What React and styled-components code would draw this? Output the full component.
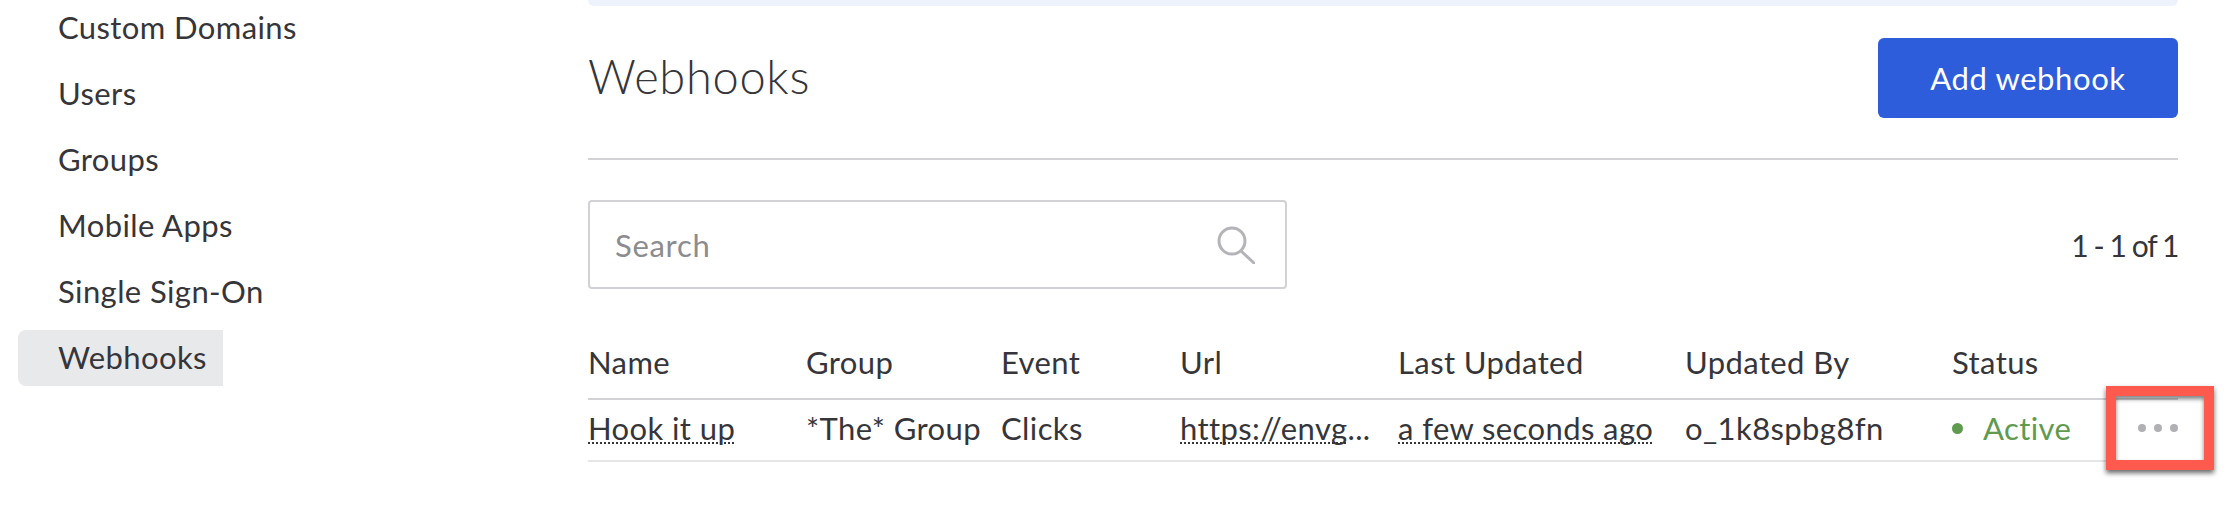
import React from "react";
import styled, { createGlobalStyle } from "styled-components";

const GlobalStyle = createGlobalStyle`
  html, body {
    margin: 0;
    padding: 0;
    background: #fff;
  }
  body {
    font-family: "Lato", "Liberation Sans", sans-serif;
    color: #35353a;
  }
`;

const Page = styled.div`
  display: flex;
  width: 2236px;
  height: 514px;
  overflow: hidden;
`;

const Sidebar = styled.nav`
  width: 570px;
  padding-left: 18px;
  box-sizing: border-box;
  display: flex;
  flex-direction: column;
  gap: 10px;
  flex-shrink: 0;
`;

const NavItem = styled.a`
  display: flex;
  align-items: center;
  height: 56px;
  width: 205px;
  box-sizing: border-box;
  padding: 0 0 3px 40px;
  font-size: 31px;
  letter-spacing: 0.4px;
  white-space: nowrap;
  border-radius: 8px 0 0 8px;
  background: ${(p) => (p.$active ? "#e8e9eb" : "transparent")};
`;

const Main = styled.main`
  position: relative;
  width: 1666px;
  box-sizing: border-box;
  padding: 0 58px 0 18px;
  flex-shrink: 0;
`;

const Banner = styled.div`
  height: 6px;
  background: #edf2fd;
  border-radius: 0 0 6px 6px;
`;

const Header = styled.header`
  display: flex;
  justify-content: space-between;
  align-items: center;
  margin-top: 32px;
  padding-bottom: 40px;
  border-bottom: 2px solid #d2d2d6;
`;

const Title = styled.h2`
  margin: 0 0 5px;
  font-size: 47px;
  font-weight: 300;
  letter-spacing: 0.7px;
`;

const AddButton = styled.button`
  width: 300px;
  height: 80px;
  border: 0;
  border-radius: 6px;
  background: #2d5ddb;
  color: #fff;
  font-family: inherit;
  font-size: 31px;
  letter-spacing: 0.6px;
`;

const SearchRow = styled.div`
  display: flex;
  justify-content: space-between;
  align-items: center;
  margin-top: 40px;
`;

const SearchBox = styled.div`
  display: flex;
  align-items: center;
  justify-content: space-between;
  width: 699px;
  height: 89px;
  box-sizing: border-box;
  padding: 0 30px 0 25px;
  border: 2px solid #d2d2d6;
  border-radius: 4px;
`;

const Placeholder = styled.span`
  font-size: 31px;
  color: #8c8c90;
  letter-spacing: 0.7px;
`;

const Count = styled.span`
  font-size: 30px;
  letter-spacing: -1.4px;
  word-spacing: 0;
`;

const Table = styled.div`
  display: flex;
  flex-direction: column;
`;

const Row = styled.div`
  display: grid;
  grid-template-columns: 218px 195px 179px 218px 287px 267px 186px 40px;
  align-items: center;
  box-sizing: border-box;
  height: ${(p) => p.$height}px;
  padding-top: ${(p) => p.$top || 0}px;
  padding-bottom: ${(p) => p.$bottom || 0}px;
  border-bottom: 2px solid ${(p) => p.$line};
  font-size: 31px;
  letter-spacing: 0.4px;
  white-space: nowrap;
`;

const Dotted = styled.span`
  text-decoration: underline dotted 2px #35353a;
  text-decoration-skip-ink: none;
  text-underline-offset: 2px;
`;

const Status = styled.span`
  display: flex;
  align-items: center;
  gap: 20px;
  color: #5f9a4f;
`;

const Dot = styled.i`
  width: 11px;
  height: 11px;
  border-radius: 50%;
  background: #5f9a4f;
`;

const Dots = styled.span`
  display: flex;
  gap: 8px;
`;

const MoreDot = styled.i`
  width: 8px;
  height: 8px;
  border-radius: 50%;
  background: #b0b0b5;
`;

const Callout = styled.div`
  position: absolute;
  left: 1536px;
  top: 386px;
  width: 108px;
  height: 84px;
  box-sizing: border-box;
  border: 10px solid #ff5a4d;
  box-shadow: 0 3px 5px rgba(0, 0, 0, 0.6), inset 0 3px 4px rgba(0, 0, 0, 0.5);
`;

const SearchIcon = () => (
  <svg width="38" height="38" viewBox="0 0 38 38" fill="none" stroke="#b4b4b8" strokeWidth="3" strokeLinecap="round">
    <circle cx="15" cy="15" r="13" />
    <path d="M24 25 L37 37" />
  </svg>
);

const navItems = ["Custom Domains", "Users", "Groups", "Mobile Apps", "Single Sign-On", "Webhooks"];
const columns = ["Name", "Group", "Event", "Url", "Last Updated", "Updated By", "Status"];

export default function App() {
  return (
    <Page>
      <GlobalStyle />
      <Sidebar>
        {navItems.map((item) => (
          <NavItem key={item} $active={item === "Webhooks"}>
            {item}
          </NavItem>
        ))}
      </Sidebar>
      <Main>
        <Banner />
        <Header>
          <Title>Webhooks</Title>
          <AddButton>Add webhook</AddButton>
        </Header>
        <SearchRow>
          <SearchBox>
            <Placeholder>Search</Placeholder>
            <SearchIcon />
          </SearchBox>
          <Count>1 - 1 of 1</Count>
        </SearchRow>
        <Table>
          <Row $height={111} $top={36} $line="#d2d2d6">
            {columns.map((col) => (
              <span key={col}>{col}</span>
            ))}
          </Row>
          <Row $height={62} $bottom={4} $line="#e6e6e8">
            <span><Dotted>Hook it up</Dotted></span>
            <span>*The* Group</span>
            <span>Clicks</span>
            <span><Dotted>https://envg</Dotted>...</span>
            <span><Dotted>a few seconds ago</Dotted></span>
            <span>o_1k8spbg8fn</span>
            <Status><Dot />Active</Status>
            <Dots><MoreDot /><MoreDot /><MoreDot /></Dots>
          </Row>
        </Table>
        <Callout />
      </Main>
    </Page>
  );
}
